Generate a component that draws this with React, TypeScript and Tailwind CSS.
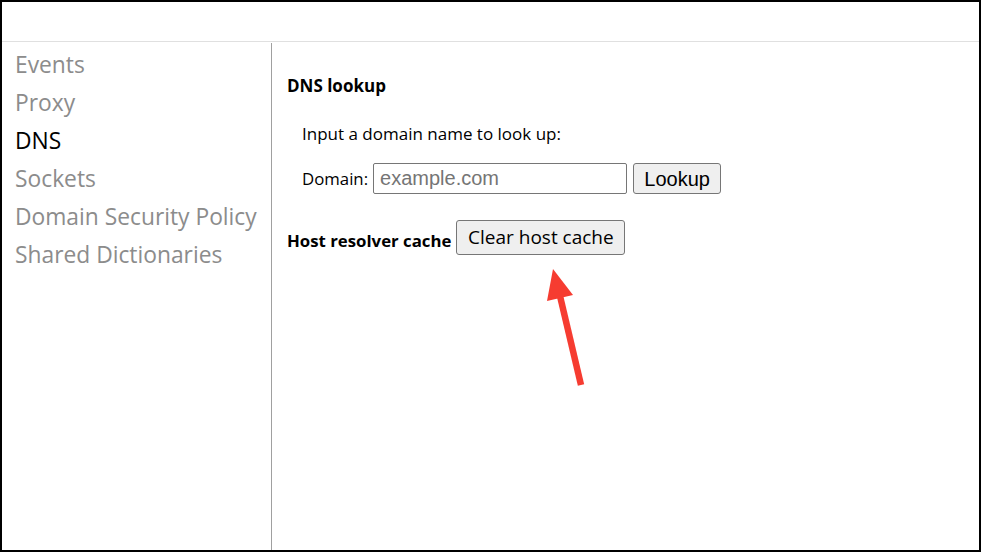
import React from 'react';

const navItems = ['Events', 'Proxy', 'DNS', 'Sockets', 'Domain Security Policy', 'Shared Dictionaries'];

const App: React.FC = () => {
  return (
    <div className="relative w-[981px] h-[552px] box-border border-2 border-black bg-white overflow-hidden font-['Open_Sans',sans-serif]">
      {/* top strip */}
      <div className="h-[40px] border-b border-[#e0e0e0]" />

      <div className="flex mt-px h-[507px]">
        {/* sidebar */}
        <nav className="w-[270px] shrink-0 border-r border-[#a0a0a0] pt-[3px] pl-[13px]">
          {navItems.map((item) => (
            <div
              key={item}
              className={`h-[38px] leading-[38px] text-[22.8px] ${item === 'DNS' ? 'text-black' : 'text-[#8c8c8c]'}`}
            >
              {item}
            </div>
          ))}
        </nav>

        {/* content */}
        <main className="flex-1 pl-[15px] pt-[31px] text-[17px] text-black">
          <h2 className="font-bold leading-[24px]">DNS lookup</h2>

          <div className="pl-[15px]">
            <p className="mt-[24px] leading-[24px]">Input a domain name to look up:</p>
            <div className="mt-[17px] flex items-center">
              <span className="leading-[24px] text-[16.8px]">Domain:</span>
              <input
                type="text"
                placeholder="example.com"
                className="ml-[5px] w-[254px] h-[31px] box-border border border-[#767676] rounded-[2px] px-[6px] font-['Liberation_Sans',sans-serif] text-[20px] placeholder:text-[#757575] outline-none"
              />
              <button className="ml-[6px] w-[88px] h-[31px] box-border border border-[#767676] rounded-[3px] bg-[#efefef] font-['Liberation_Sans',sans-serif] text-[20px] text-black">
                Lookup
              </button>
            </div>
          </div>

          <div className="mt-[26px] flex items-center">
            <h2 className="font-bold leading-[24px] mt-[6px] text-[16.8px]">Host resolver cache</h2>
            <button className="ml-[5px] w-[169px] h-[35px] box-border border border-[#767676] rounded-[3px] bg-[#efefef] text-[19px] text-black leading-none">
              Clear host cache
            </button>
          </div>
        </main>
      </div>

      {/* annotation arrow */}
      <svg className="absolute left-0 top-0 pointer-events-none" width="981" height="552" viewBox="0 0 981 552">
        <line x1="579" y1="383" x2="558" y2="294" stroke="#f63c31" strokeWidth="6.5" />
        <polygon points="551,267 545,299 571,293" fill="#f63c31" />
      </svg>
    </div>
  );
};

export default App;
